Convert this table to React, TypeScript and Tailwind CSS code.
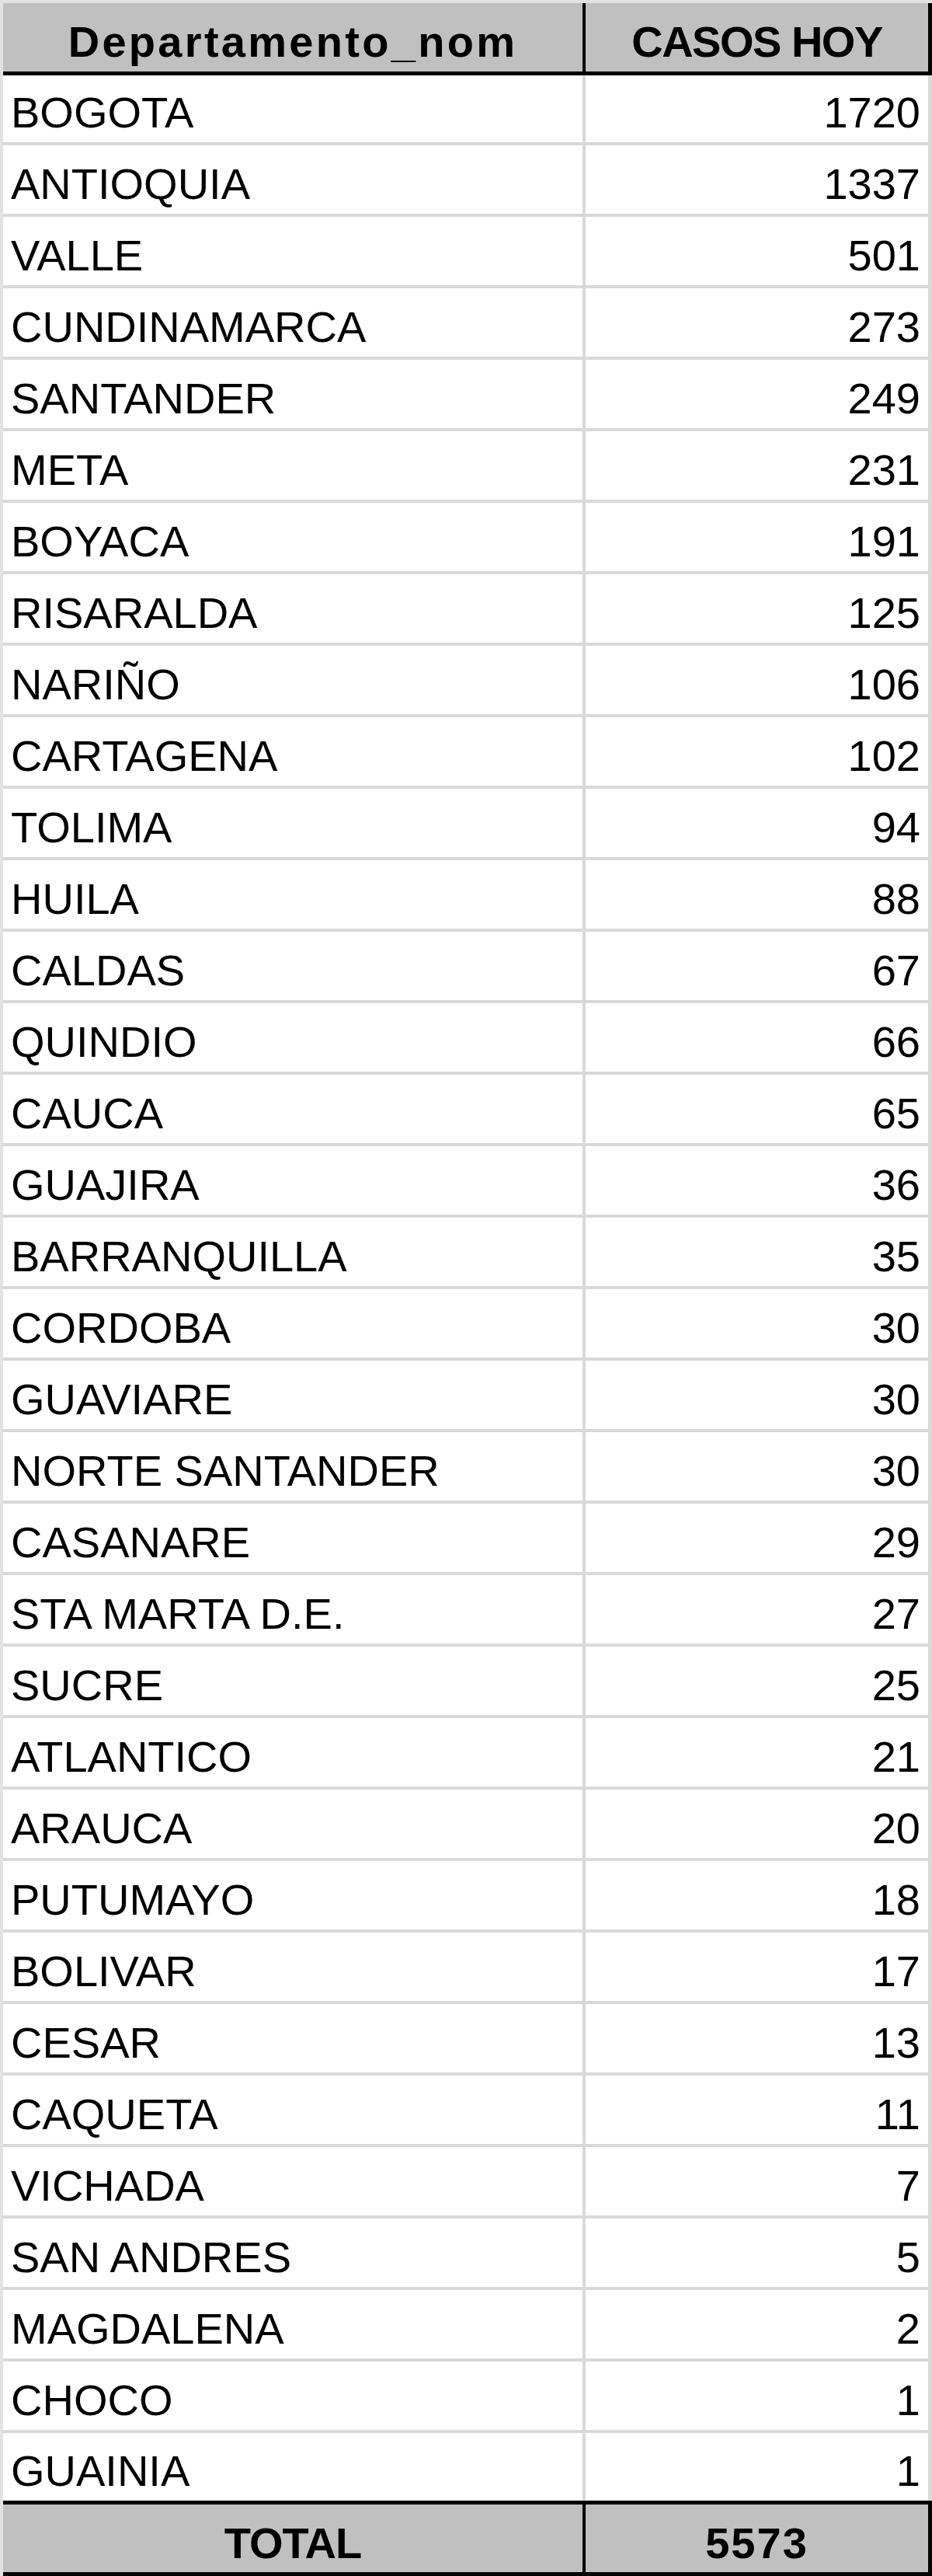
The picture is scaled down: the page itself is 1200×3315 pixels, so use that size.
import React from "react";

const rows: [string, number][] = [
  ["BOGOTA", 1720],
  ["ANTIOQUIA", 1337],
  ["VALLE", 501],
  ["CUNDINAMARCA", 273],
  ["SANTANDER", 249],
  ["META", 231],
  ["BOYACA", 191],
  ["RISARALDA", 125],
  ["NARIÑO", 106],
  ["CARTAGENA", 102],
  ["TOLIMA", 94],
  ["HUILA", 88],
  ["CALDAS", 67],
  ["QUINDIO", 66],
  ["CAUCA", 65],
  ["GUAJIRA", 36],
  ["BARRANQUILLA", 35],
  ["CORDOBA", 30],
  ["GUAVIARE", 30],
  ["NORTE SANTANDER", 30],
  ["CASANARE", 29],
  ["STA MARTA D.E.", 27],
  ["SUCRE", 25],
  ["ATLANTICO", 21],
  ["ARAUCA", 20],
  ["PUTUMAYO", 18],
  ["BOLIVAR", 17],
  ["CESAR", 13],
  ["CAQUETA", 11],
  ["VICHADA", 7],
  ["SAN ANDRES", 5],
  ["MAGDALENA", 2],
  ["CHOCO", 1],
  ["GUAINIA", 1],
];

export default function App() {
  const last = rows.length - 1;
  return (
    <div className="w-[1200px] h-[3315px] bg-[#e2e2e2] pt-[4px] pl-[4px] font-['Liberation_Sans',Arial,sans-serif] text-black text-[56px] leading-[56px] overflow-hidden">
      {/* Header */}
      <div className="flex h-[93px] bg-[#c0c0c0] border-b-[5px] border-r-[5px] border-black">
        <div className="w-[750px] border-r-[4px] border-black flex items-end justify-center pb-[10px] font-bold tracking-[3.3px]">
          Departamento_nom
        </div>
        <div className="flex-1 flex items-end justify-center pb-[10px] font-bold tracking-[-1.5px]">
          CASOS HOY
        </div>
      </div>

      {/* Data rows */}
      {rows.map(([name, value], i) => {
        const h =
          i === 0
            ? "h-[90px] border-b-[4px]"
            : i === last
            ? "h-[87px]"
            : "h-[92px] border-b-[4px]";
        return (
          <div
            key={name + i}
            className={`flex bg-white border-r-[5px] border-[#d9d9d9] ${h}`}
          >
            <div className="w-[750px] border-r-[4px] border-[#d9d9d9] flex items-end pl-[10px] pb-[10px] whitespace-nowrap">
              {name}
            </div>
            <div className="flex-1 flex items-end justify-end pr-[10px] pb-[10px]">
              {value}
            </div>
          </div>
        );
      })}

      {/* Total */}
      <div className="flex h-[97px] bg-[#c0c0c0] border-t-[5px] border-b-[5px] border-r-[5px] border-black">
        <div className="w-[750px] border-r-[4px] border-black flex items-end justify-center pb-[9px] font-bold tracking-[-1px]">
          TOTAL
        </div>
        <div className="flex-1 flex items-end justify-center pb-[9px] font-bold tracking-[2px]">
          5573
        </div>
      </div>
    </div>
  );
}
